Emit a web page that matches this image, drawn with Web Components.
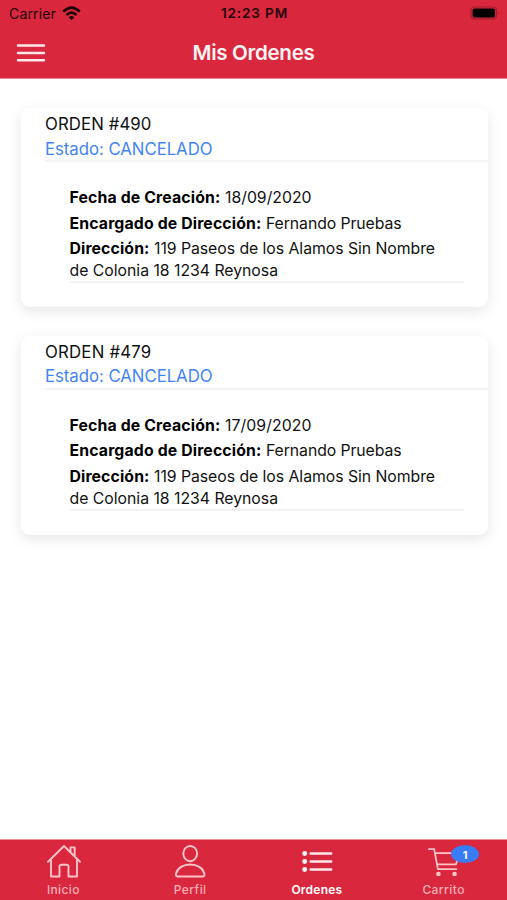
<!DOCTYPE html>
<html lang="es">
<head>
<meta charset="utf-8">
<title>Mis Ordenes</title>
<style>
html,body{margin:0;height:100%}
body{font-family:Inter,"Liberation Sans",sans-serif;background:#fff;color:#111;overflow:hidden}
</style>
</head>
<body>
<orders-app></orders-app>
<script>
const define = (name, html, setup) => {
  const tpl = document.createElement('template');
  tpl.innerHTML = html;
  customElements.define(name, class extends HTMLElement {
    constructor() {
      super();
      this.attachShadow({mode: 'open'}).append(tpl.content.cloneNode(true));
    }
    connectedCallback() { if (setup) setup(this, this.shadowRoot); }
  });
};

// Text run whose tracking is adjusted to a given advance width.
define('fit-text', `<style>:host{display:inline-block;white-space:nowrap}span{display:inline-block}</style><span><slot></slot></span>`,
  (el, root) => {
    const span = root.querySelector('span');
    const target = parseFloat(el.getAttribute('w'));
    const n = el.textContent.length;
    const natural = span.getBoundingClientRect().width;
    if (natural && target) span.style.letterSpacing = ((target - natural) / n).toFixed(3) + 'px';
    if (target) el.style.width = target + 'px';
  });

define('status-bar', `<style>
:host{display:grid;grid-template-columns:1fr auto 1fr;align-items:center;height:27px;padding:0 7px 0 9px;color:#25060b;font-size:14px;line-height:27px}
.l{display:flex;align-items:center;gap:6px}.r{display:flex;justify-content:flex-end}
b{font-weight:600;font-size:13.6px}svg{display:block}
.l svg{margin-top:-1px}.r svg{margin-top:-1px}
</style>
<div class="l"><fit-text w="47">Carrier</fit-text>
<svg width="19" height="15" viewBox="0 0 19 15"><g fill="none" stroke="#1c0205" stroke-width="2.6"><path d="M1.3 5.7Q9.5-2.4 17.7 5.7"/><path d="M4.5 9Q9.5 4.2 14.5 9"/></g><path d="M9.5 14.2 6.7 11.2Q9.5 8.8 12.3 11.2Z" fill="#1c0205"/></svg></div>
<b><fit-text w="67">12:23 PM</fit-text></b>
<div class="r"><svg width="30" height="14" viewBox="0 0 30 14"><rect x="1" y="1" width="25.4" height="12" rx="3.5" fill="none" stroke="#a01c2c" stroke-width="1.2"/><rect x="2.6" y="2.6" width="22.4" height="8.8" rx="2" fill="#000"/><path d="M27.8 5Q29.6 7 27.8 9Z" fill="#8c1826"/></svg></div>`);

define('nav-header', `<style>
:host{display:grid;grid-template-columns:1fr auto 1fr;align-items:center;height:51px;padding:0 16px;color:#fff2f3;border-bottom:1px solid #e98a95}
h1{margin:0;font-size:20.6px;font-weight:600;line-height:50px}svg{display:block}
</style>
<svg width="30" height="20" viewBox="0 0 30 20" stroke="#ffe9eb" stroke-width="2.5" stroke-linecap="round"><path d="M2 2.6H28M2 9.9H28M2 17.2H28"/></svg>
<h1><fit-text w="122">Mis Ordenes</fit-text></h1><i></i>`);

define('order-card', `<style>
:host{display:block;box-sizing:border-box;height:199px;border-radius:9px;background:#fff;box-shadow:0 4px 14px rgba(0,0,0,.1)}
header{margin-left:24.5px;height:54px;border-bottom:2px solid #f3f3f3;font-size:16.8px;line-height:24.5px;padding-top:4px;box-sizing:border-box}
.state{color:#4285f0}header div{height:24.5px}
section{margin:25px 24.5px 0 49px;height:96px;box-sizing:border-box;border-bottom:2px solid #f3f3f3;font-size:15.8px;line-height:22px;display:flex;flex-direction:column}
.row{display:flex;gap:4.5px;height:22px;margin-bottom:3.7px}.row.a{margin-bottom:0}
b{font-weight:650;color:#000}
</style>
<header><div><slot name="title"></slot></div><div class="state"><slot name="state"></slot></div></header>
<section>
<div class="row"><b><fit-text w="151">Fecha de Creación:</fit-text></b><slot name="date"></slot></div>
<div class="row"><b><fit-text w="192">Encargado de Dirección:</fit-text></b><slot name="person"></slot></div>
<div class="row a"><b><fit-text w="80">Dirección:</fit-text></b><slot name="street"></slot></div>
<div><slot name="city"></slot></div>
</section>`);

define('tab-item', `<style>
:host{display:flex;flex-direction:column;align-items:center;color:#fbb0b8;font-size:12px;font-weight:500;line-height:14px}
:host([active]){color:#fff;font-weight:600}
.icon{position:relative;width:38px;height:36px;margin:4px 0 3px}
::slotted(svg){display:block;width:38px;height:36px;overflow:visible}
.badge{position:absolute;left:26.5px;top:.5px;width:28px;height:18px;border-radius:50%;background:#387cf7;color:#fff;font:700 11px/20px Inter,sans-serif;text-align:center}
.badge:empty{display:none}
</style><div class="icon"><slot name="icon"></slot><span class="badge"></span></div><slot></slot>`,
  (el, root) => { root.querySelector('.badge').textContent = el.getAttribute('badge') || ''; });

define('tab-bar', `<style>
:host{display:grid;grid-template-columns:repeat(4,1fr);height:61px;border-top:1px solid #ee919b;background:#d9273d;box-sizing:border-box}
</style>
<tab-item><svg slot="icon" viewBox="-1 0 38 36" fill="none" stroke="#ffc3c8" stroke-width="1.9" stroke-linejoin="round" stroke-linecap="round"><path d="M3 17.8 19 2 35 17.8M6 15V32.5H14.5V22.5Q14.5 20.7 16.2 20.7H21.8Q23.5 20.7 23.5 22.5V32.5H32V15M25.5 8.3V3.4H29.7V12.4"/></svg><fit-text w="33">Inicio</fit-text></tab-item>
<tab-item><svg slot="icon" viewBox="0 0 38 36" fill="none" stroke="#ffc3c8" stroke-width="1.9" stroke-linejoin="round"><ellipse cx="19.2" cy="9.6" rx="6.9" ry="7.6"/><path d="M6.5 32.5Q4.6 32.5 5 29.8C6.3 23.7 12.4 20.5 19.2 20.5S32 23.7 33.4 29.8Q33.8 32.5 31.9 32.5Z"/></svg><fit-text w="33">Perfil</fit-text></tab-item>
<tab-item active><svg slot="icon" viewBox="0 .5 38 36"><g fill="#fff"><circle cx="6.7" cy="10" r="2.4"/><circle cx="6.7" cy="18" r="2.4"/><circle cx="6.7" cy="26" r="2.4"/></g><path d="M12.6 10H33.2M12.6 18H33.2M12.6 26H33.2" stroke="#ffe9eb" stroke-width="2.4" stroke-linecap="round"/></svg><fit-text w="51">Ordenes</fit-text></tab-item>
<tab-item badge="1"><svg slot="icon" viewBox="0 0 38 36" fill="none" stroke="#ffc3c8" stroke-width="1.8" stroke-linejoin="round" stroke-linecap="round"><path d="M4 5.2H9.2L12.9 25.2H31.4M10 9.2H34.2L31 20.4H12"/><g fill="#ffc3c8" stroke="none"><circle cx="13.4" cy="30" r="2.3"/><circle cx="29.6" cy="30" r="2.3"/></g></svg><fit-text w="42.5">Carrito</fit-text></tab-item>`);

const order = (id, date) => `<order-card>
<fit-text slot="title" w="106.5">ORDEN #${id}</fit-text><fit-text slot="state" w="167.5">Estado: CANCELADO</fit-text>
<fit-text slot="date" w="86.5">${date}</fit-text><fit-text slot="person" w="135.5">Fernando Pruebas</fit-text>
<fit-text slot="street" w="281">119 Paseos de los Alamos Sin Nombre</fit-text><fit-text slot="city" w="208.5">de Colonia 18 1234 Reynosa</fit-text>
</order-card>`;

define('orders-app', `<style>
:host{display:flex;flex-direction:column;height:900px;width:507px}
.top{background:#d9273d}
main{flex:1;display:flex;flex-direction:column;gap:28.5px;padding:29px 19px 0 20.5px}
</style>
<div class="top"><status-bar></status-bar><nav-header></nav-header></div>
<main>${order('490', '18/09/2020')}${order('479', '17/09/2020')}</main>
<tab-bar></tab-bar>`);
</script>
</body>
</html>
